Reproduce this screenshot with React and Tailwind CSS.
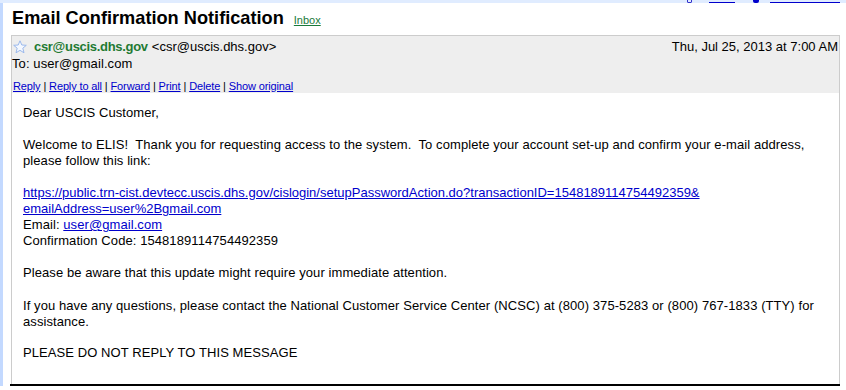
import React from "react";

function Star() {
  return (
    <svg width="14" height="14" viewBox="0 0 14 14" className="shrink-0">
      <polygon
        points="7,0.8 8.8,5 13.3,5.3 9.8,8.2 11,12.8 7,10.3 3,12.8 4.2,8.2 0.7,5.3 5.2,5"
        fill="#f4f8ff"
        stroke="#9bb9ec"
        strokeWidth="1"
        strokeLinejoin="round"
      />
    </svg>
  );
}

function L({ children, className = "" }) {
  return <a className={"text-[#0000cc] underline cursor-pointer " + className}>{children}</a>;
}

export default function App() {
  return (
    <div className="w-[846px] h-[390px] bg-white flex flex-col overflow-hidden text-black font-['Liberation_Sans',Arial,sans-serif]">
      {/* top strip */}
      <div className="h-[3px] bg-[#e0ecff] relative shrink-0">
        <div className="absolute right-[6px] -top-[6px] flex items-end gap-[6px] h-[9px]">
          <span className="w-[5px] h-[8px] border border-[#3333cc] rounded-[1px]" />
          <span className="w-[26px] h-[9px] border-b border-[#0000cc] ml-[11px]" />
          <span className="w-[6px] h-[8px] bg-[#0000cc] rounded-[2px] ml-[12px]" />
          <span className="w-[70px] h-[9px] border-b border-[#0000cc] ml-[5px]" />
        </div>
      </div>
      <div className="flex flex-1 min-h-0">
        <div className="w-[3px] bg-[#c3d9ff] shrink-0" />
        <div className="flex-1 flex flex-col pl-[7px] pr-[6px]">
          {/* title */}
          <div className="flex items-baseline mt-[4px] mb-[5px] pl-[2px] h-[23px]">
            <h1 className="text-[18.2px] leading-[23px] font-bold">Email Confirmation Notification</h1>
            <a className="ml-[10px] text-[11px] leading-[13px] text-[#1a7a3a] underline">Inbox</a>
          </div>
          {/* header */}
          <div className="ml-[1px] border-t border-l border-r border-[#cccccc] bg-[#eeeeee] text-[13px] leading-[16px] pt-[1px] h-[58px]">
            <div className="flex items-center h-[19px]">
              <div className="pl-[1px] w-[22px] flex items-center">
                <Star />
              </div>
              <span className="font-bold text-[#1f7a33] tracking-[-0.3px]">csr@uscis.dhs.gov</span>
              <span className="ml-[4px]">&lt;csr@uscis.dhs.gov&gt;</span>
              <span className="ml-auto pr-[1px]">Thu, Jul 25, 2013 at 7:00 AM</span>
            </div>
            <div className="tracking-[0.1px]">To: user@gmail.com</div>
            <div className="mt-[8px] pl-[1px] text-[11px] leading-[12px] tracking-[-0.13px]">
              <L>Reply</L> | <L>Reply to all</L> | <L>Forward</L> | <L>Print</L> | <L>Delete</L> |{" "}
              <L>Show original</L>
            </div>
          </div>
          {/* body */}
          <div className="ml-[1px] flex-1 border-l border-r border-[#cccccc] pl-[11px] pt-[12px] text-[13px] leading-[16px] tracking-[0.08px] whitespace-nowrap">
            <p>Dear USCIS Customer,</p>
            <p className="mt-[16px]">
              Welcome to ELIS!{"\u00a0 "}Thank you for requesting access to the system.{"\u00a0 "}To complete your account
              set-up and confirm your e-mail address,
              <br />
              please follow this link:
            </p>
            <p className="mt-[16px]">
              <L className="tracking-[0px]">
                https://public.trn-cist.devtecc.uscis.dhs.gov/cislogin/setupPasswordAction.do?transactionID=1548189114754492359&amp;
              </L>
              <br />
              <L className="tracking-[0px]">emailAddress=user%2Bgmail.com</L>
              <br />
              Email: <L>user@gmail.com</L>
              <br />
              Confirmation Code: 1548189114754492359
            </p>
            <p className="mt-[16px]">Please be aware that this update might require your immediate attention.</p>
            <p className="mt-[17px]">
              If you have any questions, please contact the National Customer Service Center (NCSC) at (800) 375-5283 or
              (800) 767-1833 (TTY) for
              <br />
              assistance.
            </p>
            <p className="mt-[15px]">PLEASE DO NOT REPLY TO THIS MESSAGE</p>
          </div>
          <div className="h-[2px] bg-black shrink-0" />
        </div>
      </div>
      <div className="h-[4px] bg-white shrink-0" />
    </div>
  );
}
